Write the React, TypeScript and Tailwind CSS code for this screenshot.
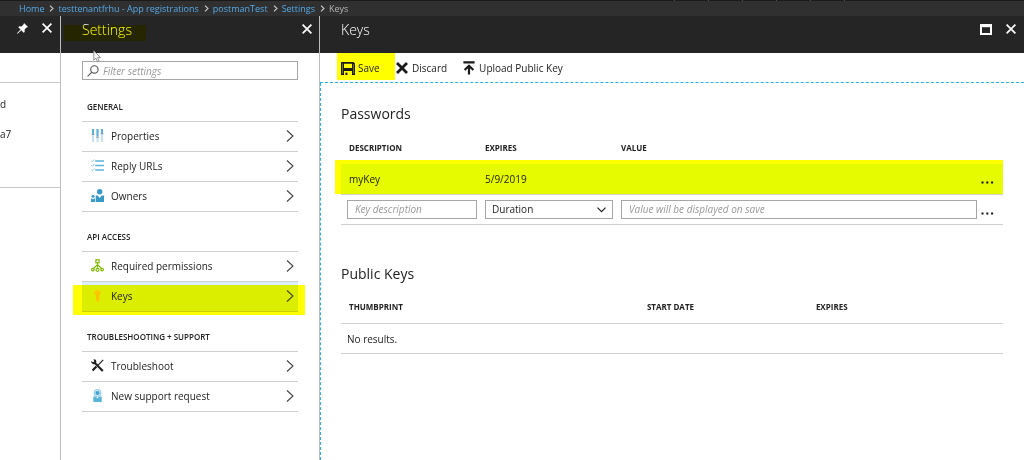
import { useState, type ReactNode } from 'react';

const crumbs = ['Home', 'testtenantfrhu - App registrations', 'postmanTest', 'Settings'];

function CloseIcon() {
  return (
    <svg className="w-[10px] h-[10px]" viewBox="0 0 10 10" fill="none" stroke="currentColor" strokeWidth="1.7">
      <path d="M0.6 0.6l8.8 8.8M9.4 0.6L0.6 9.4" />
    </svg>
  );
}

function Chevron() {
  return (
    <svg className="w-2 h-3" viewBox="0 0 8 12" fill="none" stroke="#444" strokeWidth="1.1">
      <path d="M1 0.5l6 5.5-6 5.5" />
    </svg>
  );
}

function PropertiesIcon() {
  return (
    <svg className="w-[13px] h-[13px]" viewBox="0 0 13 13">
      <path fill="#c3e3f2" d="M1 0h2v13H1zM5.5 0h2v13h-2zM10 0h2v13h-2z" />
      <path fill="#59b4d9" d="M1 0h2v5H1zM5.5 0h2v7h-2zM10 0h2v4h-2z" />
      <path fill="#8aa3ae" d="M0.6 4.8h2.8v1.3H0.6zM5.1 7.4h2.8v1.3H5.1zM9.6 4h2.8v1.3H9.6z" />
    </svg>
  );
}

function ReplyIcon() {
  return (
    <svg className="w-[13px] h-[13px]" viewBox="0 0 13 13" fill="none">
      <path stroke="#59b4d9" strokeWidth="1.3" d="M4.2 2H13M4.2 6.5H13M4.2 11H13" />
      <path stroke="#7cc3e2" strokeWidth="0.9" d="M0.3 1.6l1.1 1.1L3.4 0.4M0.3 6.1l1.1 1.1L3.4 4.9M0.3 10.6l1.1 1.1L3.4 9.4" />
    </svg>
  );
}

function OwnersIcon() {
  return (
    <svg className="w-[13px] h-[13px]" viewBox="0 0 13 13" fill="#3999c6">
      <circle cx="8.7" cy="2.7" r="2.7" />
      <path d="M4.7 13V6.6h2l2 2.4 2-2.4H13V13z" />
      <circle cx="2" cy="7.2" r="1.5" />
      <path d="M0 13V9.4h1.1L2 10.6l1-1.2h1V13z" />
    </svg>
  );
}

function PermissionsIcon() {
  return (
    <svg className="w-[13px] h-[13px]" viewBox="0 0 13 13" fill="none" stroke="#7fba00" strokeWidth="1.2">
      <rect x="4.9" y="0.8" width="3.2" height="3" />
      <path d="M6.5 3.8v5M6.5 5.6L2.6 9.2M6.5 5.6l3.9 3.6" />
      <circle cx="1.9" cy="10.6" r="1.3" />
      <circle cx="6.5" cy="10.8" r="1.5" />
      <circle cx="11.1" cy="10.6" r="1.3" />
    </svg>
  );
}

function KeyIcon() {
  return (
    <svg className="w-[13px] h-[13px]" viewBox="0 0 13 13">
      <path fill="#ffc40d" d="M6.5 0.3L10.2 3.6 8.2 6.2v5.2L6.8 13 5 11.8V6.2L2.8 3.6z" />
      <circle cx="6.5" cy="2.6" r="0.7" fill="#dceef9" />
    </svg>
  );
}

function ToolsIcon() {
  return (
    <svg className="w-[13px] h-[13px]" viewBox="0 0 13 13" fill="none" stroke="#1e1e1e">
      <path strokeWidth="1.2" d="M12.2 0.8L6.4 6.8" />
      <path strokeWidth="2.2" d="M5.4 7.6L1.6 11.6" />
      <path strokeWidth="2.1" d="M3.4 3.4l8.4 8.6" />
      <path fill="#1e1e1e" stroke="none" d="M0.2 2l1.9 1.3 1.1-0.9L2.5 0.3C4.6 0 5.8 1.6 5.2 3.6L3.6 5.2C1.6 5.6 0 4.2 0.2 2z" />
    </svg>
  );
}

function SupportIcon() {
  return (
    <svg className="w-[13px] h-[13px]" viewBox="0 0 13 13">
      <path fill="#59b4d9" d="M2.3 13V7.6h2.5l1.7 1.9 1.7-1.9h2.5V13z" />
      <circle cx="6.5" cy="4" r="3.5" fill="#d5edf7" stroke="#7cc3e2" strokeWidth="0.9" />
      <circle cx="6.5" cy="4" r="2.1" fill="#3fa5d0" />
    </svg>
  );
}

const sections: { title: string; items: { label: string; icon: ReactNode }[] }[] = [
  {
    title: 'GENERAL',
    items: [
      { label: 'Properties', icon: <PropertiesIcon /> },
      { label: 'Reply URLs', icon: <ReplyIcon /> },
      { label: 'Owners', icon: <OwnersIcon /> },
    ],
  },
  {
    title: 'API ACCESS',
    items: [
      { label: 'Required permissions', icon: <PermissionsIcon /> },
      { label: 'Keys', icon: <KeyIcon /> },
    ],
  },
  {
    title: 'TROUBLESHOOTING + SUPPORT',
    items: [
      { label: 'Troubleshoot', icon: <ToolsIcon /> },
      { label: 'New support request', icon: <SupportIcon /> },
    ],
  },
];

function Dots() {
  return (
    <button aria-label="More options" className="block w-[13px] ml-1 pt-2">
      <svg className="w-[13px] h-[3px]" viewBox="0 0 13 3" fill="#111">
        <path d="M0.5 0.5h2v2h-2zM5.3 0.5h2v2h-2zM10.1 0.5h2v2h-2z" />
      </svg>
    </button>
  );
}

function Breadcrumb() {
  return (
    <nav className="bg-[#303030]">
      <div className="h-px bg-[#1a1a1a] flex justify-end pr-[146px]">
        {[0, 1, 2, 3, 4, 5].map((n) => (
          <span key={n} className="w-[34px] border-l border-[#555]" />
        ))}
      </div>
      <ol className="h-[15px] flex items-center gap-1 pl-[19px] text-[9px] leading-[15px] whitespace-nowrap">
        {crumbs.map((crumb) => (
          <li key={crumb} className="flex items-center gap-[5px]">
            <a href="#" className="text-[#54a9e8]">{crumb}</a>
            <svg className="w-[5px] h-[7px]" viewBox="0 0 5 7" fill="none" stroke="#c8c8c8" strokeWidth="1.1">
              <path d="M1 0.6l3 2.9-3 2.9" />
            </svg>
          </li>
        ))}
        <li className="text-[#b5b5b5]">Keys</li>
      </ol>
    </nav>
  );
}

function SettingsBlade({ selected, onSelect }: { selected: string; onSelect: (label: string) => void }) {
  return (
    <section className="w-[259px] shrink-0 border-r border-[#bdbdbd]">
      <header className="relative h-[37px] bg-[#252525] flex justify-between pl-[21px] pr-[7px] pt-1 text-white">
        <h1 className="text-[14px] leading-5 font-light">Settings</h1>
        <button aria-label="Close settings" className="h-[18px]">
          <CloseIcon />
        </button>
        <span className="absolute left-[3px] top-[9px] w-[82px] h-4 bg-[#ffff00] mix-blend-multiply pointer-events-none" />
        <svg className="absolute left-8 top-[34px] w-[9px] h-[13px]" viewBox="0 0 9 13">
          <path fill="#fff" stroke="#8c8583" strokeWidth="0.9" d="M0.8 0.8v9.4l2.2-2 1.5 3.6 1.6-0.7-1.5-3.4h3z" />
        </svg>
      </header>

      <div className="px-[21px] pt-2 pb-8">
        <label className="h-[19px] mb-0.5 flex items-center gap-1 border border-[#a6a6a6] pl-1">
          <svg className="w-3 h-3 shrink-0" viewBox="0 0 12 12" fill="none" stroke="#555" strokeWidth="1.1">
            <circle cx="7.4" cy="4.4" r="3.7" />
            <path d="M4.8 7.2L0.6 11.4" />
          </svg>
          <input
            type="text"
            aria-label="Filter settings"
            placeholder="Filter settings"
            className="min-w-0 flex-1 text-[10px] leading-4 outline-none placeholder:italic placeholder:text-[#999]"
          />
        </label>

        {sections.map((section) => (
          <div key={section.title}>
            <h2 className="h-10 flex items-end pl-[5px] pb-[6px] border-b border-[#cfcfcf] text-[8px] leading-4 font-semibold">
              {section.title}
            </h2>
            <ul>
              {section.items.map(({ label, icon }) => (
                <li key={label} className="relative">
                  <button
                    onClick={() => onSelect(label)}
                    className={`w-full h-[30px] flex items-center pl-[9px] pr-1 pb-0.5 border-b border-[#cfcfcf] text-left ${
                      selected === label ? 'bg-[#dceef9]' : ''
                    }`}
                  >
                    {icon}
                    <span className="ml-[7px] flex-1">{label}</span>
                    <Chevron />
                  </button>
                  {selected === label && (
                    <span className="absolute -left-[9px] -right-[7px] top-[3px] h-[30px] bg-[#ffff00] mix-blend-multiply pointer-events-none" />
                  )}
                </li>
              ))}
            </ul>
          </div>
        ))}
      </div>
    </section>
  );
}

function Toolbar() {
  return (
    <div className="h-[30px] flex items-center border-b border-dashed border-[#1fb5e8] pl-[17px]">
      <button className="h-[27px] mb-0.5 w-[58px] bg-[#ffff00] flex items-center gap-[3px] pl-1 pt-0.5">
        <svg className="w-[14px] h-[14px]" viewBox="0 0 14 14" fill="#1a1a1a">
          <path fillRule="evenodd" d="M0 1h12.4L14 2.4V14h-3v-4H3v4H0zM3 2.8V7h8V2.8zM1.6 2.6v10h0.4v-10zM12 3v9.6h0.4V3z" />
          <path d="M4.4 11.6h2V14h-2z" />
        </svg>
        Save
      </button>
      <button className="flex items-center gap-1 ml-px">
        <svg className="w-3 h-3" viewBox="0 0 12 12" fill="none" stroke="#1a1a1a" strokeWidth="2.8">
          <path d="M1 1l10 10M11 1L1 11" />
        </svg>
        Discard
      </button>
      <button className="flex items-center gap-1 ml-4">
        <svg className="w-3 h-[14px]" viewBox="0 0 12 14" fill="none" stroke="#1a1a1a" strokeWidth="2.2">
          <path d="M0.4 1.4h11.2M6 13.4V5.4M1.6 9L6 4.8 10.4 9" />
        </svg>
        Upload Public Key
      </button>
    </div>
  );
}

function Passwords() {
  return (
    <div className="relative">
      <table className="w-full table-fixed border-collapse text-left">
        <colgroup>
          <col className="w-[136px]" />
          <col className="w-[136px]" />
          <col />
          <col className="w-[26px]" />
        </colgroup>
        <thead>
          <tr className="h-8 text-[8px] leading-4">
            <th className="pl-2">DESCRIPTION</th>
            <th className="pl-2">EXPIRES</th>
            <th className="pl-2">VALUE</th>
            <td />
          </tr>
        </thead>
        <tbody>
          <tr className="h-[30px] border-b border-[#cfcfcf] bg-[#e6faff]">
            <td className="pl-2">myKey</td>
            <td className="pl-2">5/9/2019</td>
            <td />
            <td><Dots /></td>
          </tr>
          <tr className="h-[30px] border-b border-[#cfcfcf]">
            <td className="pl-[6px]">
              <input
                type="text"
                aria-label="Key description"
                placeholder="Key description"
                className="block w-full h-[19px] border border-[#a6a6a6] px-[7px] placeholder:italic placeholder:text-[#999]"
              />
            </td>
            <td className="pl-2">
              <div className="relative">
                <select
                  aria-label="Duration"
                  className="block w-full h-[19px] appearance-none border border-[#a6a6a6] px-[6px]"
                >
                  <option>Duration</option>
                  <option>In 1 year</option>
                  <option>In 2 years</option>
                  <option>Never expires</option>
                </select>
                <svg className="absolute right-[7px] top-[7px] w-[9px] h-[6px] pointer-events-none" viewBox="0 0 9 6" fill="none" stroke="#222" strokeWidth="1.2">
                  <path d="M0.5 0.7l4 4 4-4" />
                </svg>
              </div>
            </td>
            <td className="pl-2">
              <input
                type="text"
                aria-label="Value"
                placeholder="Value will be displayed on save"
                className="block w-full h-[19px] border border-[#a6a6a6] px-[7px] placeholder:italic placeholder:text-[#999]"
              />
            </td>
            <td><Dots /></td>
          </tr>
        </tbody>
      </table>
      <span className="absolute -left-[6px] right-0 top-7 h-[34px] bg-[#ffff00] mix-blend-multiply pointer-events-none" />
    </div>
  );
}

function PublicKeys() {
  return (
    <table className="w-full table-fixed border-collapse text-left">
      <thead>
        <tr className="h-8 border-b border-[#cfcfcf] text-[8px] leading-4">
          <th className="w-[45%] pl-2">THUMBPRINT</th>
          <th className="w-[169px] pl-2">START DATE</th>
          <th className="pl-2">EXPIRES</th>
        </tr>
      </thead>
      <tbody>
        <tr className="h-[30px] border-b border-[#cfcfcf]">
          <td colSpan={3} className="pl-[6px]">No results.</td>
        </tr>
      </tbody>
    </table>
  );
}

export default function App() {
  const [selected, setSelected] = useState('Keys');

  return (
    <div className="min-h-screen flex flex-col bg-white font-['Open_Sans','Noto_Sans',sans-serif] text-[10px] leading-4 text-[#222]">
      <Breadcrumb />
      <main className="flex-1 flex">
        <aside className="w-[61px] shrink-0 border-r border-[#bdbdbd]">
          <div className="h-[37px] bg-[#252525] flex items-start justify-end gap-[14px] pr-2 pt-[7px] text-white">
            <button aria-label="Pin">
              <svg className="w-[11px] h-[11px]" viewBox="0 0 11 11" fill="currentColor">
                <path d="M7 0l4 4-1.4 0.5-2 2 0.1 2.4-1 0.8L4.3 7.3 0.6 10.7 0 10.3 3.6 6.5 1.3 4.2l0.9-0.9 2.3 0.1 2-2z" />
              </svg>
            </button>
            <button aria-label="Close">
              <CloseIcon />
            </button>
          </div>
          <div className="h-[30px] border-b border-[#c8c8c8]" />
          <div className="h-[105px] border-b border-[#c8c8c8] pt-[13px]">
            <p>d</p>
            <p className="mt-[14px]">a7</p>
          </div>
        </aside>

        <SettingsBlade selected={selected} onSelect={setSelected} />

        <section className="flex-1 min-w-0 flex flex-col">
          <header className="h-[37px] bg-[#252525] flex justify-between pl-[21px] pr-2 pt-1 text-white">
            <h1 className="text-[14px] leading-5 font-light">Keys</h1>
            <div className="flex items-center gap-[14px] h-[18px]">
              <button aria-label="Maximize">
                <svg className="w-3 h-[11px]" viewBox="0 0 12 11" fill="none" stroke="currentColor">
                  <path strokeWidth="2" d="M1 1h10v9H1z" />
                  <path strokeWidth="3" d="M0 1.7h12" />
                </svg>
              </button>
              <button aria-label="Close keys">
                <CloseIcon />
              </button>
            </div>
          </header>
          <Toolbar />
          <div className="flex-1 border-l border-dashed border-[#1fb5e8] pl-5 pr-[21px] pt-[21px] pb-8">
            <h2 className="mb-2 text-[14px] leading-5">Passwords</h2>
            <Passwords />
            <h2 className="mt-[39px] mb-2 text-[14px] leading-5">Public Keys</h2>
            <PublicKeys />
          </div>
        </section>
      </main>
    </div>
  );
}
